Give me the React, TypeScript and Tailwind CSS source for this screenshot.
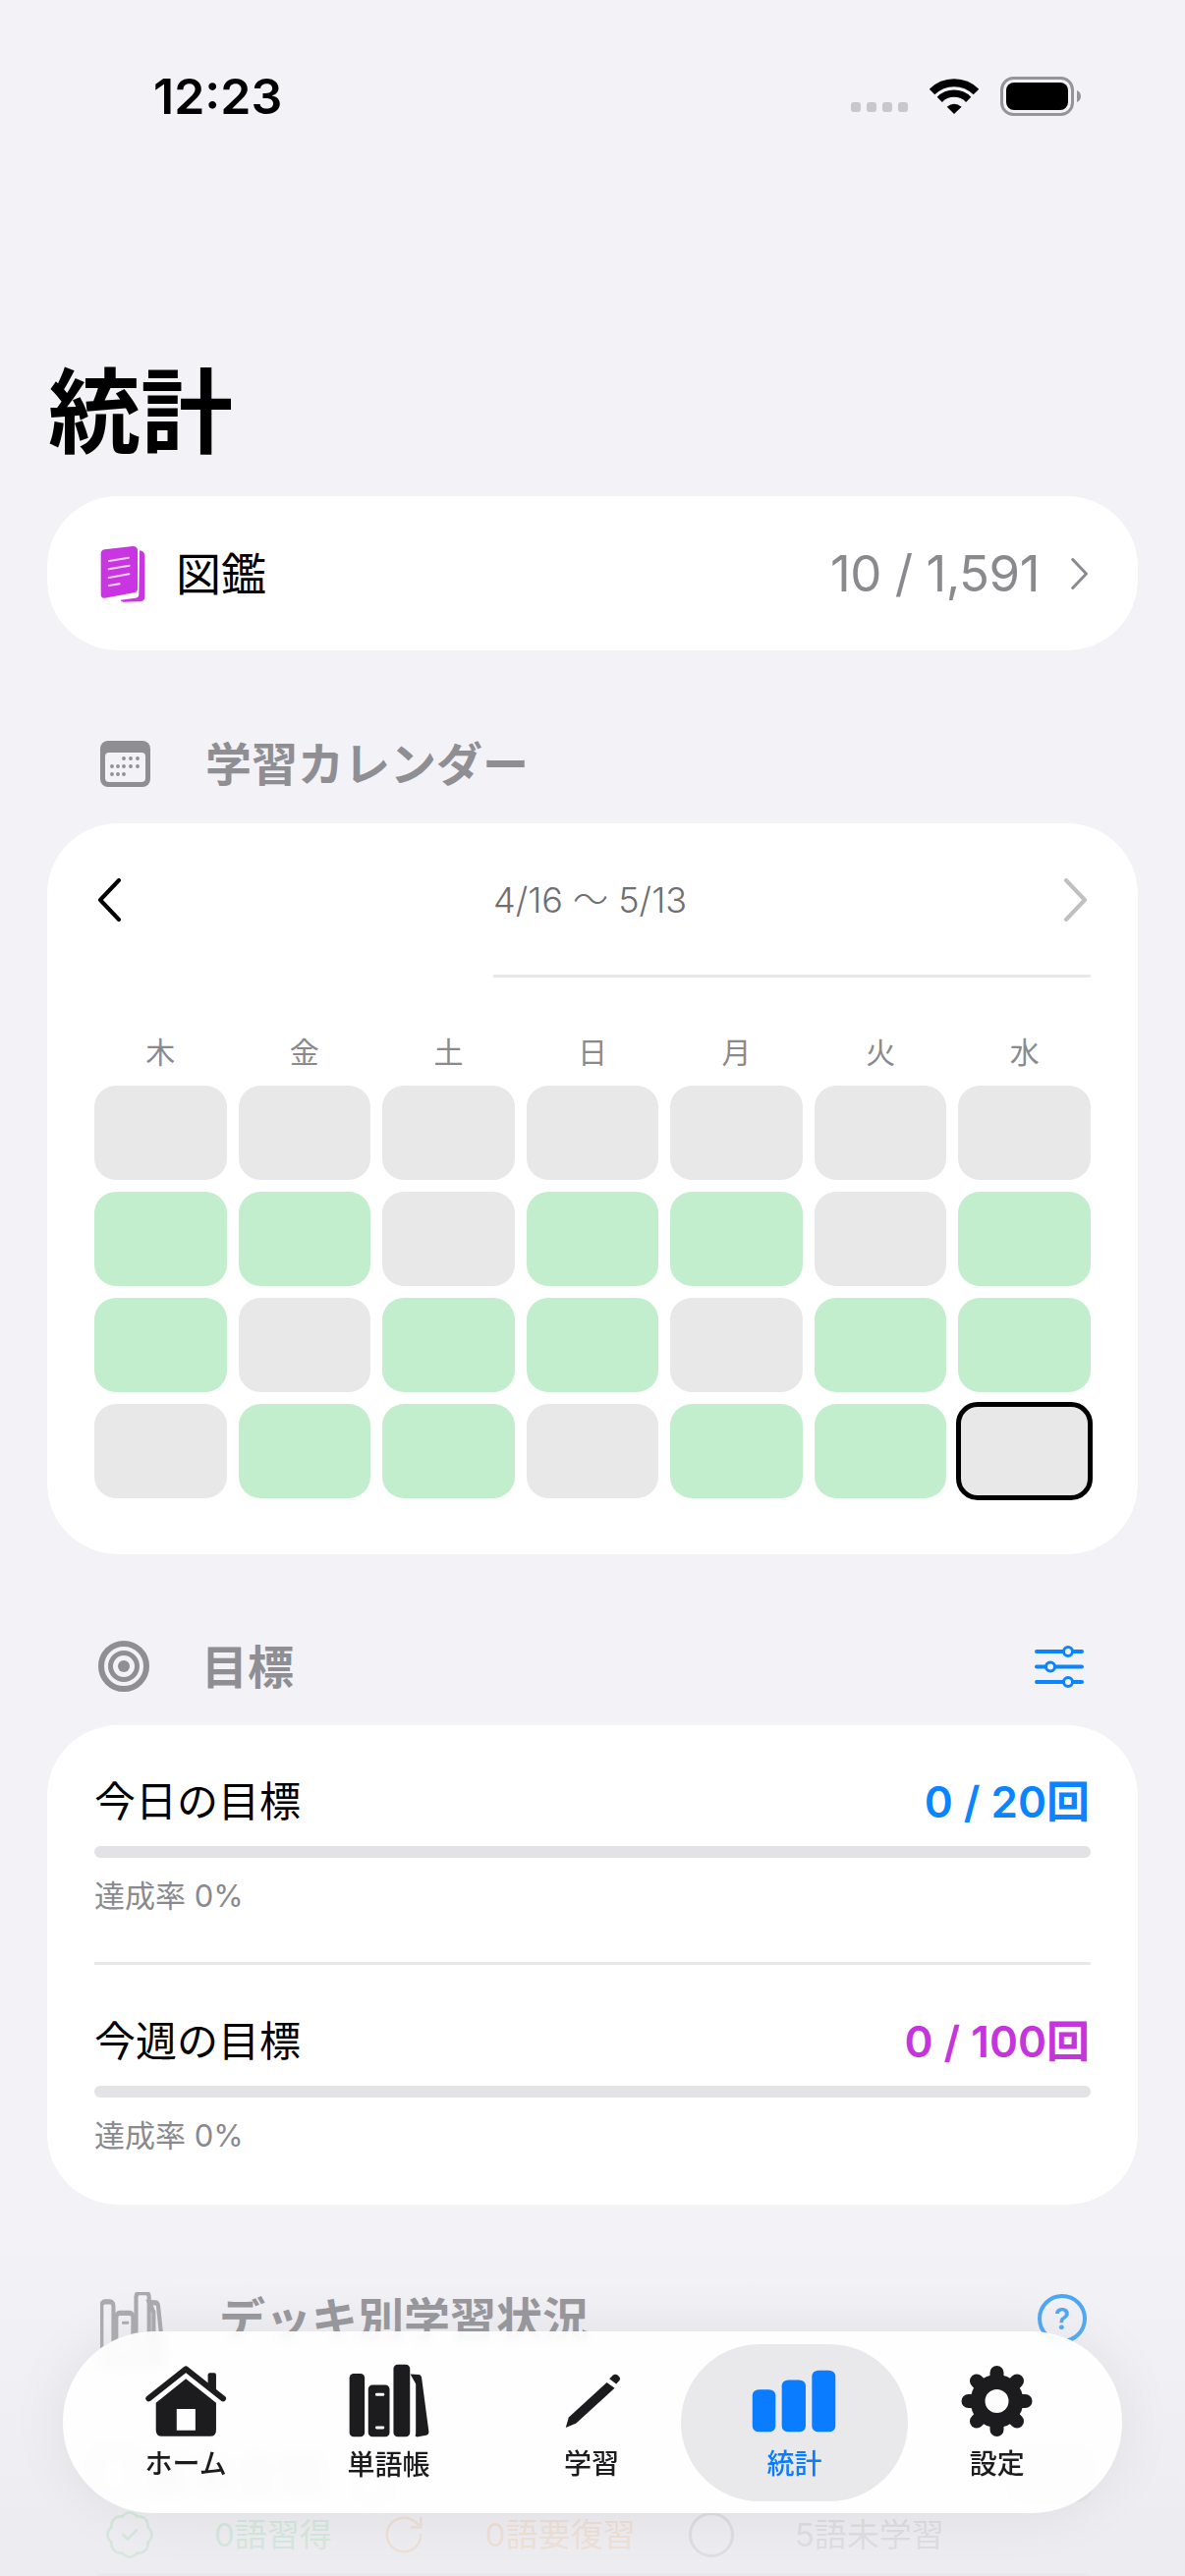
import React from "react";
import { BadgeCheck, RotateCw } from "lucide-react";

const weekdays = ["木", "金", "土", "日", "月", "火", "水"];

// 0 = no study, 1 = studied, 2 = today
const days = [
  0, 0, 0, 0, 0, 0, 0,
  1, 1, 0, 1, 1, 0, 1,
  1, 0, 1, 1, 0, 1, 1,
  0, 1, 1, 0, 1, 1, 2,
];

const Chevron = ({ left, className }: { left?: boolean; className: string }) => (
  <svg viewBox="0 0 24 44" fill="none" className={className}>
    <path
      d={left ? "M22 2 3 22l19 20" : "M2 2l19 20L2 42"}
      stroke="currentColor"
      strokeWidth="4"
      strokeLinecap="round"
      strokeLinejoin="round"
    />
  </svg>
);

const StatusBar = () => (
  <div className="flex h-[40px] items-center justify-between pl-[156px] pr-[106px] pt-0">
    <span className="text-[50px] font-semibold leading-none text-black">12:23</span>
    <div className="flex h-[40px] items-center">
      <div className="mt-[22px] flex gap-[6px]">
        <span className="h-[10px] w-[10px] rounded-[3px] bg-[#c7c7cc]" />
        <span className="h-[10px] w-[10px] rounded-[3px] bg-[#c7c7cc]" />
        <span className="h-[10px] w-[10px] rounded-[3px] bg-[#c7c7cc]" />
        <span className="h-[10px] w-[10px] rounded-[3px] bg-[#c7c7cc]" />
      </div>
      <svg viewBox="315 85 150 115" className="ml-[22px] h-[38px] w-[50px]">
        <path d="M322 129A96 96 0 0 1 458 129" fill="none" stroke="#000" strokeWidth="24" />
        <path d="M345.5 152.5A63 63 0 0 1 434.5 152.5" fill="none" stroke="#000" strokeWidth="22" />
        <path d="M368 175q22-18 45 0l-23 22z" fill="#000" />
      </svg>
      <svg viewBox="0 0 82 40" className="ml-[22px] h-[40px] w-[82px]">
        <rect x="1.5" y="1.5" width="72" height="37" rx="12" fill="none" stroke="#949499" strokeWidth="3" />
        <rect x="6" y="6" width="63" height="28" rx="8" fill="#000" />
        <path d="M78 14c2.500 1 4 3 4 6s-1.500 5-4 6z" fill="#949499" />
      </svg>
    </div>
  </div>
);

const SectionHeader = ({
  icon,
  title,
  right,
  textClass,
  rightPad,
}: {
  icon: React.ReactNode;
  title: string;
  right?: React.ReactNode;
  textClass: string;
  rightPad?: string;
}) => (
  <div className={`flex h-[50px] items-center justify-between pl-[102px] ${rightPad ?? "pr-[102px]"}`}>
    <div className="flex items-center">
      {icon}
      <span className={`text-[47px] font-bold leading-none text-[#8e8e93] ${textClass}`}>{title}</span>
    </div>
    {right}
  </div>
);

const Goal = ({
  title,
  value,
  color,
}: {
  title: string;
  value: string;
  color: string;
}) => (
  <div>
    <div className="flex h-[50px] items-center justify-between">
      <span className="text-[42px] leading-none text-black">{title}</span>
      <span className={`mr-[1px] text-[44px] font-semibold leading-none ${color}`}>{value}</span>
    </div>
    <div className="mt-[20px] h-[12px] rounded-full bg-[#e3e3e5]" />
    <div className="mt-[18px] flex h-[40px] items-center text-[31px] leading-none text-[#8a8a8e]">
      達成率 0%
    </div>
  </div>
);

const HomeIcon = () => (
  <svg viewBox="270 325 248 222" preserveAspectRatio="none" className="h-[74px] w-[83px]">
    <path d="M460 356q0-6 6-6h13q6 0 6 6v50l-25-20z" fill="#1c1c1e" />
    <path d="M280 428 393 338l113 90" fill="none" stroke="#1c1c1e" strokeWidth="18" strokeLinecap="round" strokeLinejoin="round" />
    <path
      fillRule="evenodd"
      d="M393 368l92 73v84q0 18-18 18H320q-18 0-18-18v-84zM365 460v65h57v-65z"
      fill="#1c1c1e"
    />
  </svg>
);

const BooksIcon = ({ outline }: { outline?: boolean }) => {
  const paint = outline
    ? { fill: "none", stroke: "#a3a3a8", strokeWidth: 16 }
    : { fill: "#1c1c1e" };
  return (
    <svg
      viewBox="885 318 255 230"
      preserveAspectRatio="none"
      className={outline ? "h-[76px] w-[66px]" : "h-[76px] w-[84px]"}
    >
      <rect x="890" y="348" width="47" height="195" rx="13" {...paint} />
      <rect x="948" y="383" width="66" height="160" rx="13" {...paint} />
      <rect x="1026" y="320" width="51" height="223" rx="13" {...paint} />
      <path d="M1078 350l25 1q9 1 10 10l22 165q1 10-8 12l-25 5q-6 1-9-3q2-2 2-10V380z" {...paint} />
      <rect x="970" y="408" width="28" height="9" rx="4" fill={outline ? "#a3a3a8" : "#fff"} />
      <rect x="970" y="510" width="28" height="9" rx="4" fill={outline ? "#a3a3a8" : "#fff"} />
    </svg>
  );
};

const PencilIcon = () => (
  <svg viewBox="95 230 150 170" preserveAspectRatio="none" className="mb-[9px] ml-[3px] h-[56px] w-[57px]">
    <path d="M97 397l8-32 102-108 21 18-103 108z" fill="#1c1c1e" />
    <path d="M214 246l9-11q6-5 12-1l5 5q5 6 1 12l-9 11z" fill="#1c1c1e" />
  </svg>
);

const BarsIcon = () => (
  <svg viewBox="588 216 230 197" preserveAspectRatio="none" className="mb-[5px] h-[64px] w-[86px]">
    <rect x="590" y="278" width="63" height="133" rx="18" fill="#0a7cff" />
    <rect x="670" y="248" width="65" height="163" rx="18" fill="#0a7cff" />
    <rect x="752" y="218" width="64" height="193" rx="18" fill="#0a7cff" />
  </svg>
);

const GearIcon = () => (
  <svg viewBox="0 0 72 72" className="mb-[1px] h-[72px] w-[73px]">
    <circle cx="36" cy="36" r="27" fill="#1c1c1e" />
    {[0, 45, 90, 135, 180, 225, 270, 315].map((deg) => (
      <line
        key={deg}
        x1="36"
        y1="20"
        x2="36"
        y2="7"
        stroke="#1c1c1e"
        strokeWidth="14"
        strokeLinecap="round"
        transform={`rotate(${deg} 36 36)`}
      />
    ))}
    <circle cx="36" cy="36" r="12" fill="#fdfdfe" />
  </svg>
);

const tabs = [
  { label: "ホーム", icon: <HomeIcon /> },
  { label: "単語帳", icon: <BooksIcon /> },
  { label: "学習", icon: <PencilIcon /> },
  { label: "統計", icon: <BarsIcon />, active: true },
  { label: "設定", icon: <GearIcon /> },
];

const TabBar = () => (
  <div className="absolute left-[64px] top-[2373px] grid h-[185px] w-[1078px] grid-cols-5 rounded-[92px] bg-white/90 pl-[22px] pr-[24px] pt-[33px] shadow-[0_0_60px_rgba(0,0,0,0.07)] backdrop-blur-[6px]">
    {tabs.map((tab) => (
      <div key={tab.label} className="relative flex h-[120px] flex-col items-center">
        {tab.active && (
          <div className="absolute -bottom-[20px] -left-[12px] -right-[12px] -top-[20px] rounded-[80px] bg-[#e9e9eb]" />
        )}
        <div className="relative flex h-[76px] items-end">{tab.icon}</div>
        <div
          className={`relative mt-[9px] flex h-[36px] items-center text-[28px] font-medium leading-none ${
            tab.active ? "text-[#0a7cff]" : "text-[#1c1c1e]"
          }`}
        >
          {tab.label}
        </div>
      </div>
    ))}
  </div>
);

export default function App() {
  return (
    <div className="relative h-[2622px] w-[1206px] overflow-hidden bg-[#f2f2f7] pt-[78px] font-['Inter','Noto_Sans_CJK_JP',sans-serif]">
      <StatusBar />

      <h1 className="ml-[49px] mt-[256px] text-[94px] font-bold leading-[92px] text-black">統計</h1>

      <div className="mx-[48px] mt-[39px] flex h-[157px] items-center justify-between rounded-[72px] bg-white pl-[54px] pr-[50px]">
        <div className="flex items-center">
          <svg viewBox="66 108 138 174" className="h-[58px] w-[46px]">
            <path d="M186 124q14 2 16 14v128q-1 13-14 14l-52 1q-8-1-8-6l46-6q10-2 10-12z" fill="#c935e0" />
            <path d="M68 134q0-11 11-13l86-10q13-1 15 11v118q0 11-11 13l-89 16q-12 2-12-11z" fill="#c935e0" />
            <path d="M93 156l60-10M92 181l63-11M92 207l62-11M93 231l32-5" stroke="#f3d4f8" strokeWidth="6" strokeLinecap="round" />
          </svg>
          <span className="ml-[31px] text-[46px] leading-none text-black">図鑑</span>
        </div>
        <div className="flex items-center">
          <span className="text-[51px] font-normal leading-none tracking-[-0.5px] text-[#8a8a8e]">10 / 1,591</span>
          <Chevron className="ml-[32px] h-[32px] w-[18px] text-[#8a8a8e]" />
        </div>
      </div>

      <div className="mt-[90px]">
        <SectionHeader
          textClass="ml-[56px]"
          title="学習カレンダー"
          icon={
            <svg viewBox="0 0 51 47" className="h-[47px] w-[51px]">
              <rect width="51" height="47" rx="8" fill="#8e8e93" />
              <rect x="5" y="12" width="41" height="30" rx="4" fill="#f2f2f7" />
              {[
                [24, 18], [31, 18], [38, 18],
                [12, 26], [18, 26], [24, 26], [31, 26], [38, 26],
                [12, 34], [18, 34], [24, 34],
              ].map(([x, y]) => (
                <circle key={`${x}-${y}`} cx={x} cy={y} r="1.900" fill="#8e8e93" />
              ))}
            </svg>
          }
        />
      </div>

      <div className="mx-[48px] mt-[36px] rounded-[72px] bg-white px-[48px] pb-[57px] pt-[53px]">
        <div className="flex">
          <div className="h-[50px] w-[406px] pl-[3px] pt-[3px]">
            <Chevron left className="h-[44px] w-[24px] text-black" />
          </div>
          <div className="flex-1">
            <div className="flex h-[50px] items-center justify-between pr-[3px]">
              <span className="text-[36px] font-light leading-none text-[#6f6f73]">4/16 〜 5/13</span>
              <Chevron className="h-[44px] w-[24px] text-[#c0c0c2]" />
            </div>
            <div className="mt-[51px] h-[3px] bg-[#e8e8ea]" />
          </div>
        </div>

        <div className="mt-[56px] grid grid-cols-7 gap-x-[12px]">
          {weekdays.map((d) => (
            <div key={d} className="flex h-[40px] items-center justify-center text-[30px] leading-none text-[#8a8a8e]">
              {d}
            </div>
          ))}
        </div>

        <div className="mt-[14px] grid grid-cols-7 gap-x-[12px] gap-y-[12px]">
          {days.map((d, i) => (
            <div
              key={i}
              className={`rounded-[22px] ${
                d === 1
                  ? "h-[96px] bg-[#c3eecd]"
                  : d === 2
                    ? "-m-[2px] h-[100px] border-[5px] border-black bg-[#e8e8e8]"
                    : "h-[96px] bg-[#e8e8e8]"
              }`}
            />
          ))}
        </div>
      </div>

      <div className="mt-[89px]">
        <SectionHeader
          textClass="ml-[53px]"
          title="目標"
          icon={
            <svg viewBox="0 0 52 52" fill="none" className="-ml-[2px] h-[52px] w-[52px]">
              <circle cx="26" cy="26" r="23" stroke="#8e8e93" strokeWidth="6" />
              <circle cx="26" cy="26" r="13.500" stroke="#8e8e93" strokeWidth="5" />
              <circle cx="26" cy="26" r="6" fill="#8e8e93" />
            </svg>
          }
          right={
            <svg viewBox="0 0 50 43" fill="none" className="mr-[1px] h-[43px] w-[50px]">
              <path d="M2 6h46M2 21.500h46M2 37h46" stroke="#0a84ff" strokeWidth="4" strokeLinecap="round" />
              <circle cx="34" cy="6" r="4.500" fill="#f2f2f7" stroke="#0a84ff" strokeWidth="3" />
              <circle cx="16" cy="21.500" r="4.500" fill="#f2f2f7" stroke="#0a84ff" strokeWidth="3" />
              <circle cx="34" cy="37" r="4.500" fill="#f2f2f7" stroke="#0a84ff" strokeWidth="3" />
            </svg>
          }
        />
      </div>

      <div className="mx-[48px] mt-[35px] rounded-[72px] bg-white px-[48px] pb-[51px] pt-[53px]">
        <Goal title="今日の目標" value="0 / 20回" color="text-[#0a84ff]" />
        <div className="mb-[53px] mt-[48px] h-[3px] bg-[#e8e8ea]" />
        <Goal title="今週の目標" value="0 / 100回" color="text-[#c535dc]" />
      </div>

      <div className="mt-[91px]">
        <SectionHeader
          textClass="ml-[55px]"
          title="デッキ別学習状況"
          rightPad="pr-[100px]"
          icon={
            <div className="-mt-[4px] h-[50px] w-[66px] self-start">
              <BooksIcon outline />
            </div>
          }
          right={
            <div className="flex h-[50px] w-[50px] items-center justify-center rounded-full border-[4px] border-[#3aa0f5] text-[30px] font-semibold leading-none text-[#3aa0f5]">
              ?
            </div>
          }
        />
      </div>

      <div className="mt-[104px] flex h-[60px] items-center justify-between px-[94px] opacity-60">
        <div className="flex items-center">
          <div className="h-[52px] w-[44px] rounded-b-[22px] rounded-t-[8px] border-[5px] border-[#9a9a9f]" />
          <span className="ml-[8px] text-[46px] font-bold leading-none text-[#9a9a9f]">基本会話</span>
          <div className="ml-[32px] h-[56px] w-[34px] rounded-[8px] border-[4px] border-[#f6c98a]" />
        </div>
        <div className="h-[56px] w-[84px] rounded-[16px] bg-[#dcdcdf]" />
      </div>

      <div className="mt-[6px] flex h-[50px] items-center pl-[105px]">
        <BadgeCheck className="h-[54px] w-[54px] text-[#bfe5cc]" strokeWidth={1.200} />
        <span className="ml-[59px] text-[33px] leading-none text-[#bfe5cc]">0語習得</span>
        <RotateCw className="ml-[50px] h-[46px] w-[46px] text-[#f3d6bf]" strokeWidth={1.400} />
        <span className="ml-[60px] text-[33px] leading-none text-[#f3d6bf]">0語要復習</span>
        <div className="ml-[54px] h-[46px] w-[46px] rounded-full border-[3px] border-[#d2d2d5]" />
        <span className="ml-[62px] text-[33px] leading-none text-[#d2d2d5]">5語未学習</span>
      </div>

      <div className="mx-[96px] mt-[14px] h-[12px] rounded-full bg-[#e9e9eb]" />

      <div className="pointer-events-none absolute inset-x-0 bottom-0 h-[340px] bg-gradient-to-b from-transparent to-[#e9e9ec]/60" />

      <TabBar />
    </div>
  );
}
